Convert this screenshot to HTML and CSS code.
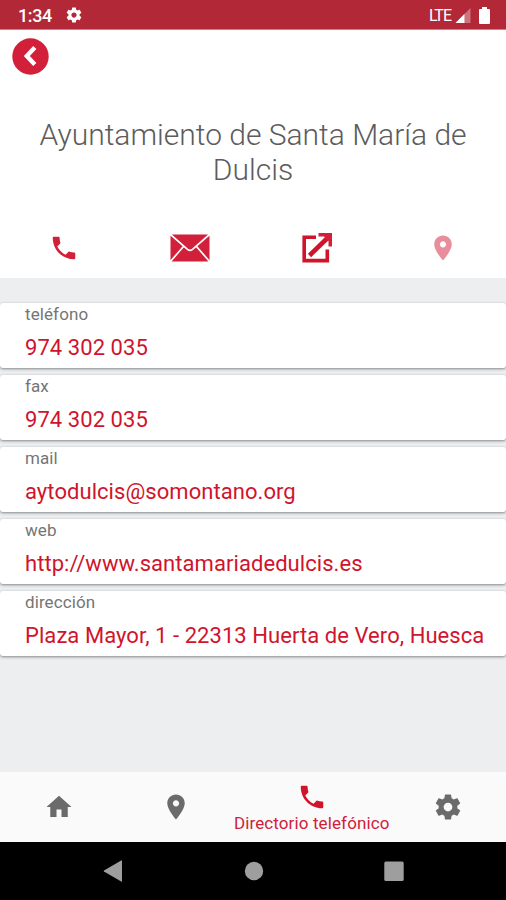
FILE: index.html
```html
<!DOCTYPE html>
<html lang="es">
<head>
	<meta charset="UTF-8">
	<title>Directorio telefónico</title>
	<link rel="stylesheet" href="styles.css">
</head>
<body>

	<!-- icons used more than once -->
	<svg class="defs">
		<symbol id="phone" viewBox="0 0 24 24"><path d="M6.620 10.790c1.440 2.830 3.760 5.140 6.590 6.590l2.200-2.200c.27-.27.67-.36 1.020-.24 1.120.37 2.330.57 3.570.57.55 0 1 .45 1 1V20c0 .55-.45 1-1 1-9.390 0-17-7.610-17-17 0-.55.45-1 1-1h3.500c.55 0 1 .45 1 1 0 1.250.2 2.450.57 3.570.11.35.03.74-.25 1.020l-2.200 2.200z"/></symbol>
		<symbol id="pin" viewBox="0 0 24 24"><path d="M12 2C8.130 2 5 5.130 5 9c0 5.250 7 13 7 13s7-7.750 7-13c0-3.870-3.130-7-7-7zm0 9.500c-1.380 0-2.500-1.120-2.500-2.500s1.120-2.500 2.500-2.500 2.500 1.120 2.500 2.500-1.120 2.500-2.500 2.500z"/></symbol>
		<symbol id="gear" viewBox="0 0 24 24"><path d="M19.43 12.98c.04-.32.07-.64.07-.98s-.03-.66-.07-.98l2.11-1.65c.19-.15.24-.42.12-.64l-2-3.46c-.12-.22-.39-.3-.61-.22l-2.49 1c-.52-.4-1.08-.73-1.69-.98l-.38-2.65C14.46 2.18 14.25 2 14 2h-4c-.25 0-.46.18-.49.42l-.38 2.65c-.61.25-1.17.59-1.69.98l-2.49-1c-.23-.09-.49 0-.61.22l-2 3.46c-.13.22-.07.49.12.64l2.11 1.65c-.04.32-.07.65-.07.98s.03.66.07.98l-2.11 1.65c-.19.15-.24.42-.12.64l2 3.46c.12.22.39.3.61.22l2.49-1c.52.4 1.08.73 1.69.98l.38 2.65c.03.24.24.42.49.42h4c.25 0 .46-.18.49-.42l.38-2.65c.61-.25 1.17-.59 1.69-.98l2.49 1c.23.09.49 0 .61-.22l2-3.46c.12-.22.07-.49-.12-.64l-2.11-1.65zM12 15.5c-1.93 0-3.5-1.57-3.5-3.5s1.57-3.5 3.5-3.5 3.5 1.57 3.5 3.5-1.57 3.5-3.5 3.5z"/></symbol>
	</svg>

	<div class="status">
		<span class="time">1:34</span>
		<svg class="status-gear"><use href="#gear"/></svg>
		<span class="lte">LTE</span>
		<svg class="signal" viewBox="0 0 16 16"><path d="M16 0v16H0z" fill="#fff" opacity=".35"/><path d="M9.500 6.500V16H0z" fill="#fff"/></svg>
		<svg class="battery" viewBox="0 0 11 17"><path d="M3 0h5v2h2q1 0 1 1v13q0 1-1 1H1q-1 0-1-1V3q0-1 1-1h2z" fill="#fff"/></svg>
	</div>

	<div class="header">
		<div class="back">
			<svg viewBox="0 0 37 37"><circle cx="18.500" cy="18.500" r="18.200"/><path d="M22.800 9.500l-8 8.500 8 8.500" fill="none" stroke="#fff" stroke-width="4.400"/></svg>
		</div>
		<h1>Ayuntamiento de Santa María de Dulcis</h1>
		<div class="actions">
			<div><svg class="icon"><use href="#phone"/></svg></div>
			<div>
				<svg class="mail" viewBox="0 0 40 28"><rect x=".5" y=".5" width="39" height="27" rx="2"/><path d="M0 0L17.500 15.300Q20 17.300 22.500 15.300L40 0M0 28L13.500 12.500M40 28L26.500 12.500" fill="none" stroke="#fff" stroke-width="1.700"/></svg>
			</div>
			<div>
				<svg class="share" viewBox="0 0 30 30"><path d="M14 4.200H2.200V27.600H25.300V16.500" fill="none" stroke="#d0142c" stroke-width="3.600"/><path d="M7.500 22.500L25 5.500" fill="none" stroke="#d0142c" stroke-width="4.600"/><path d="M16.500 0H30V13.500H26.500V8L22 3.500H16.500z"/></svg>
			</div>
			<div><svg class="icon faded"><use href="#pin"/></svg></div>
		</div>
	</div>

	<div class="list">
		<div class="card">
			<p class="label">teléfono</p>
			<p class="value">974 302 035</p>
		</div>
		<div class="card">
			<p class="label">fax</p>
			<p class="value">974 302 035</p>
		</div>
		<div class="card">
			<p class="label">mail</p>
			<p class="value">aytodulcis@somontano.org</p>
		</div>
		<div class="card">
			<p class="label">web</p>
			<p class="value">http://www.santamariadedulcis.es</p>
		</div>
		<div class="card">
			<p class="label">dirección</p>
			<p class="value">Plaza Mayor, 1 - 22313 Huerta de Vero, Huesca</p>
		</div>
	</div>

	<div class="tabs">
		<div><svg class="icon" viewBox="0 0 24 24"><path d="M10 20v-6h4v6h5v-8h3L12 3 2 12h3v8z"/></svg></div>
		<div><svg class="icon"><use href="#pin"/></svg></div>
		<div class="active">
			<svg class="icon"><use href="#phone"/></svg>
			<span>Directorio telefónico</span>
		</div>
		<div><svg class="icon"><use href="#gear"/></svg></div>
	</div>

	<div class="nav">
		<svg viewBox="0 0 22 22"><path d="M19 .8v20.400q0 .8-.8.4L1 11.600q-.8-.6 0-1.200L18.200.4q.8-.4.8.4z"/></svg>
		<svg viewBox="0 0 22 22"><circle cx="11" cy="11" r="9.200"/></svg>
		<svg viewBox="0 0 22 22"><rect x="1.300" y="1.500" width="19.400" height="19.400" rx="1.500"/></svg>
	</div>

</body>
</html>
```
FILE: styles.css
```css
*{margin:0;padding:0;box-sizing:border-box;}
body{width:506px;height:900px;display:flex;flex-direction:column;overflow:hidden;background:#eceef0;font-family:Roboto,sans-serif;}
svg{display:block;}
.defs{display:none;}
.icon{width:30px;height:30px;}

.status{height:30px;flex:none;display:flex;align-items:center;padding:1px 16px 0 18px;background:#b32836;border-bottom:1px solid #cf7c85;color:#fff;fill:#fff;}
.time{font-size:18px;font-weight:500;letter-spacing:-.4px;width:47px;}
.status-gear{width:18px;height:18px;}
.lte{margin-left:auto;font-size:16px;letter-spacing:-1px;}
.signal{width:16px;height:15px;margin-left:4px;}
.battery{width:11px;height:17px;margin-left:8px;}

.header{height:248px;flex:none;display:flex;flex-direction:column;background:#fff;fill:#d3203a;}
.back{padding:8px 0 0 12px;}
.back svg{width:37px;height:37px;}
h1{margin-top:42px;padding:0 30px;font-size:30px;line-height:35px;font-weight:300;text-align:center;color:#5c5c5c;}
.actions{display:grid;grid-template-columns:repeat(4,1fr);margin-top:46px;height:30px;padding-left:1px;}
.actions div{display:flex;justify-content:center;align-items:center;}
.mail{width:40px;height:28px;}
.share{width:30px;height:30px;}
.faded{opacity:.5;}

.list{display:flex;flex-direction:column;gap:7px;padding-top:25px;flex:1;}
.card{height:65px;padding:1px 25px 0;background:#fff;border-radius:3px;box-shadow:0 1px 3px rgba(0,0,0,.45);}
.label{font-size:17px;line-height:20px;letter-spacing:.1px;color:#757575;}
.value{margin-top:11px;font-size:22px;line-height:26px;letter-spacing:.06px;color:#d0142c;white-space:nowrap;}

.tabs{height:70px;flex:none;display:flex;padding-left:1px;background:#fafafa;fill:#6b6b6b;}
.tabs div{width:117px;display:flex;flex-direction:column;align-items:center;justify-content:center;}
.tabs .active{width:156px;fill:#d0142c;color:#d0203a;font-size:17px;line-height:20px;letter-spacing:.12px;white-space:nowrap;}
.active span{margin-top:1px;}

.nav{height:58px;flex:none;display:flex;justify-content:center;gap:118px;padding:18px 0 0 1px;background:#000;fill:#9e9e9e;}
.nav svg{width:22px;height:22px;}
```
